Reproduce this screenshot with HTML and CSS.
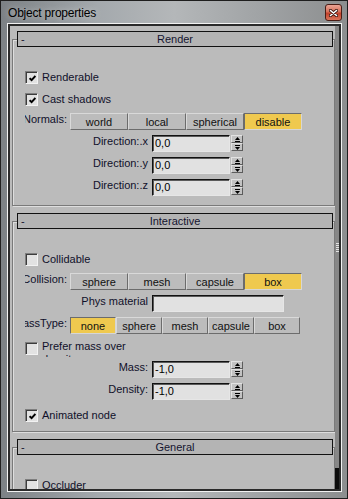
FILE: index.html
```html
<!DOCTYPE html>
<html lang="en">
<head>
  <meta charset="UTF-8">
  <title>Object properties</title>
  <link rel="stylesheet" href="styles.css">
</head>
<body>
  <div class="window">
    <!-- Title bar -->
    <div class="titlebar">
      <span class="title">Object properties</span>
      <div class="close-btn">
        <svg width="9" height="8" viewBox="0 0 9 8"><path d="M1.5 1.5l6 5M7.5 1.5l-6 5" stroke="#3a1a14" stroke-width="3.2" stroke-linecap="round"/><path d="M1.5 1.5l6 5M7.5 1.5l-6 5" stroke="#fff" stroke-width="1.6" stroke-linecap="round"/></svg>
      </div>
    </div>

    <div class="client">
      <div class="panel">
        <div class="rollouts">

          <!-- Render rollout -->
          <div class="rollout">
            <div class="rollout-head"><span class="collapse">-</span><span class="caption">Render</span></div>
            <div class="check-row">
              <span class="checkbox"><svg width="7" height="7" viewBox="0 0 7 7"><path d="M0.6 3.2l2 2 3.8-4.2" fill="none" stroke="#000" stroke-width="1.9"/></svg></span>
              <span class="check-label">Renderable</span>
            </div>
            <div class="check-row">
              <span class="checkbox"><svg width="7" height="7" viewBox="0 0 7 7"><path d="M0.6 3.2l2 2 3.8-4.2" fill="none" stroke="#000" stroke-width="1.9"/></svg></span>
              <span class="check-label">Cast shadows</span>
            </div>
            <div class="seg-row">
              <div class="seg-label"><span>Normals:</span></div>
              <button class="seg-btn">world</button>
              <button class="seg-btn">local</button>
              <button class="seg-btn">spherical</button>
              <button class="seg-btn active">disable</button>
            </div>
            <div class="field-row">
              <label class="field-label">Direction:.x</label>
              <input class="field" type="text" value="0,0">
              <div class="spinner">
                <span class="spin-btn"><svg width="5" height="5" viewBox="0 0 5 5"><path d="M2.5 0L5 3H0z"/><rect y="4" width="5" height="1"/></svg></span>
                <span class="spin-btn"><svg width="5" height="5" viewBox="0 0 5 5"><rect width="5" height="1"/><path d="M0 2H5L2.5 5z"/></svg></span>
              </div>
            </div>
            <div class="field-row">
              <label class="field-label">Direction:.y</label>
              <input class="field" type="text" value="0,0">
              <div class="spinner">
                <span class="spin-btn"><svg width="5" height="5" viewBox="0 0 5 5"><path d="M2.5 0L5 3H0z"/><rect y="4" width="5" height="1"/></svg></span>
                <span class="spin-btn"><svg width="5" height="5" viewBox="0 0 5 5"><rect width="5" height="1"/><path d="M0 2H5L2.5 5z"/></svg></span>
              </div>
            </div>
            <div class="field-row">
              <label class="field-label">Direction:.z</label>
              <input class="field" type="text" value="0,0">
              <div class="spinner">
                <span class="spin-btn"><svg width="5" height="5" viewBox="0 0 5 5"><path d="M2.5 0L5 3H0z"/><rect y="4" width="5" height="1"/></svg></span>
                <span class="spin-btn"><svg width="5" height="5" viewBox="0 0 5 5"><rect width="5" height="1"/><path d="M0 2H5L2.5 5z"/></svg></span>
              </div>
            </div>
          </div>

          <!-- Interactive rollout -->
          <div class="rollout">
            <div class="rollout-head"><span class="collapse">-</span><span class="caption">Interactive</span></div>
            <div class="check-row">
              <span class="checkbox"></span>
              <span class="check-label">Collidable</span>
            </div>
            <div class="seg-row">
              <div class="seg-label"><span>Collision:</span></div>
              <button class="seg-btn">sphere</button>
              <button class="seg-btn">mesh</button>
              <button class="seg-btn">capsule</button>
              <button class="seg-btn active">box</button>
            </div>
            <div class="field-row">
              <label class="field-label">Phys material</label>
              <input class="field wide" type="text" value="">
            </div>
            <div class="seg-row five">
              <div class="seg-label"><span>MassType:</span></div>
              <button class="seg-btn active">none</button>
              <button class="seg-btn">sphere</button>
              <button class="seg-btn">mesh</button>
              <button class="seg-btn">capsule</button>
              <button class="seg-btn">box</button>
            </div>
            <div class="check-row wrap-row">
              <span class="checkbox"></span>
              <span class="check-label">Prefer mass over density</span>
            </div>
            <div class="field-row">
              <label class="field-label">Mass:</label>
              <input class="field" type="text" value="-1,0">
              <div class="spinner">
                <span class="spin-btn"><svg width="5" height="5" viewBox="0 0 5 5"><path d="M2.5 0L5 3H0z"/><rect y="4" width="5" height="1"/></svg></span>
                <span class="spin-btn"><svg width="5" height="5" viewBox="0 0 5 5"><rect width="5" height="1"/><path d="M0 2H5L2.5 5z"/></svg></span>
              </div>
            </div>
            <div class="field-row">
              <label class="field-label">Density:</label>
              <input class="field" type="text" value="-1,0">
              <div class="spinner">
                <span class="spin-btn"><svg width="5" height="5" viewBox="0 0 5 5"><path d="M2.5 0L5 3H0z"/><rect y="4" width="5" height="1"/></svg></span>
                <span class="spin-btn"><svg width="5" height="5" viewBox="0 0 5 5"><rect width="5" height="1"/><path d="M0 2H5L2.5 5z"/></svg></span>
              </div>
            </div>
            <div class="check-row">
              <span class="checkbox"><svg width="7" height="7" viewBox="0 0 7 7"><path d="M0.6 3.2l2 2 3.8-4.2" fill="none" stroke="#000" stroke-width="1.9"/></svg></span>
              <span class="check-label">Animated node</span>
            </div>
          </div>

          <!-- General rollout -->
          <div class="rollout">
            <div class="rollout-head"><span class="collapse">-</span><span class="caption">General</span></div>
            <div class="check-row">
              <span class="checkbox"></span>
              <span class="check-label">Occluder</span>
            </div>
          </div>

        </div>
        <div class="scrollbar">
          <div class="scroll-thumb"><div class="grip"></div></div>
        </div>
      </div>
    </div>
  </div>
</body>
</html>
```

FILE: styles.css
```css
body {
  margin: 0;
  background-color: #555;
  font-family: "Liberation Sans", Arial, sans-serif;
  font-size: 11px;
  color: #10102a;
}
/* Window frame */
.window {
  width: 348px;
  height: 499px;
  box-sizing: border-box;
  border: 1px solid #1e1e1e;
  padding: 0 5px 6px 6px;
  display: flex;
  flex-direction: column;
  background: linear-gradient(90deg, #7c8185 0%, #a4a9ad 28%, #b4b7b9 50%, #a0a3a5 75%, #8c8e8f 100%);
}
.titlebar {
  height: 22px;
  display: flex;
  align-items: flex-start;
  flex-shrink: 0;
}
.title {
  flex: 1;
  padding: 1px 0 0 1px;
  font-size: 12px;
  line-height: 22px;
  letter-spacing: -0.2px;
  color: #000;
  text-shadow: 0 0 6px rgba(255,255,255,0.5);
}
.close-btn {
  width: 17px;
  height: 17px;
  margin-top: 3px;
  box-sizing: border-box;
  border: 1px solid #4a1d15;
  border-radius: 3px;
  background: linear-gradient(#eaa495, #d7705a 45%, #c2412b 55%, #d9745a);
  display: flex;
  align-items: center;
  justify-content: center;
}
.client {
  flex: 1;
  border: 1px solid #f2f2f2;
  display: flex;
  min-height: 0;
}
.panel {
  flex: 1;
  border: 2px solid #2a2a2a;
  background-color: #bbbbbb;
  display: flex;
  overflow: hidden;
}
.rollouts {
  flex: 1;
  padding: 13px 0 0 2px;
  overflow: hidden;
}
/* Rollouts */
.rollout {
  border: 1px solid #7a7a7a;
  box-shadow: inset 1px 1px 0 #dedede, 1px 1px 0 #dedede;
  padding: 0 0 9px 12px;
  margin-bottom: 15px;
}
.rollout-head {
  height: 16px;
  box-sizing: border-box;
  margin: -9px 1px 0 -8px;
  border: 1px solid #111;
  background-color: #b4b4b4;
  display: grid;
  grid-template-columns: 1fr auto 1fr;
  line-height: 14px;
  color: #141430;
}
.collapse {
  padding-left: 3px;
}
/* Checkboxes */
.check-row {
  display: flex;
  align-items: flex-start;
  height: 13px;
  margin-top: 9px;
}
.rollout-head + .check-row {
  margin-top: 24px;
}
.checkbox {
  width: 13px;
  height: 13px;
  box-sizing: border-box;
  border: 1px solid;
  border-color: #7e7e7e #f2f2f2 #f2f2f2 #7e7e7e;
  box-shadow: inset 1px 1px 0 #3c3c3c;
  background-color: #e2e2e2;
  margin-right: 4px;
  display: flex;
  align-items: center;
  justify-content: center;
  flex-shrink: 0;
}
.checkbox svg {
  margin: 1px 0 0 1px;
}
.check-label {
  line-height: 13px;
  white-space: nowrap;
}
.wrap-row {
  height: 17px;
  margin-top: 6px;
}
.wrap-row .checkbox {
  margin-top: 2px;
}
.wrap-row .check-label {
  width: 100px;
  height: 17px;
  overflow: hidden;
  white-space: normal;
}
/* Button strips */
.seg-row {
  display: flex;
  align-items: flex-start;
  height: 17px;
  margin-top: 7px;
}
.field-row + .seg-row {
  margin-top: 5px;
}
.seg-label {
  width: 42px;
  margin-right: 3px;
  display: flex;
  justify-content: flex-end;
  overflow: hidden;
  white-space: nowrap;
  line-height: 13px;
}
.seg-btn {
  width: 58px;
  height: 17px;
  margin: 0;
  box-sizing: border-box;
  border: 1px solid;
  border-color: #d9d9d9 #6c6c6c #6c6c6c #d9d9d9;
  background-color: #bcbcbc;
  font: inherit;
  color: #111;
  padding: 1px 0 0;
  line-height: 14px;
}
.seg-btn.active {
  background-color: #efc94f;
  border-color: #6c6c6c #d6d6d6 #d6d6d6 #6c6c6c;
}
.five .seg-btn {
  width: 46px;
}
/* Number fields */
.field-row {
  display: flex;
  align-items: flex-start;
  height: 17px;
  margin-top: 5px;
}
.wrap-row + .field-row {
  margin-top: 4px;
}
.field-row + .check-row {
  margin-top: 9px;
}
.field-label {
  width: 123px;
  margin-right: 4px;
  text-align: right;
  line-height: 13px;
  white-space: nowrap;
}
.field {
  width: 78px;
  height: 17px;
  margin: 0;
  box-sizing: border-box;
  border: 1px solid;
  border-color: #111 #e6e6e6 #e6e6e6 #111;
  box-shadow: inset 1px 1px 0 #5a5a5a;
  background-color: #e1e1e1;
  font: inherit;
  color: #000;
  padding: 0 0 1px 2px;
  outline: none;
}
.field.wide {
  width: 132px;
}
.spinner {
  width: 12px;
  height: 16px;
  margin-left: 1px;
  display: flex;
  flex-direction: column;
}
.spin-btn {
  flex: 1;
  box-sizing: border-box;
  border: 1px solid;
  border-color: #e2e2e2 #5c5c5c #5c5c5c #e2e2e2;
  background-color: #c2c2c2;
  display: flex;
  align-items: center;
  justify-content: center;
}
.spin-btn svg {
  fill: #000;
}
/* Rollout scrollbar */
.scrollbar {
  width: 4px;
  background-color: #0c0c0c;
  flex-shrink: 0;
}
.scroll-thumb {
  height: 442px;
  background-color: #878787;
  display: flex;
  align-items: center;
  justify-content: center;
}
.grip {
  width: 3px;
  height: 9px;
  background: repeating-linear-gradient(#e4e4e4 0 1px, transparent 1px 2px);
}
```
